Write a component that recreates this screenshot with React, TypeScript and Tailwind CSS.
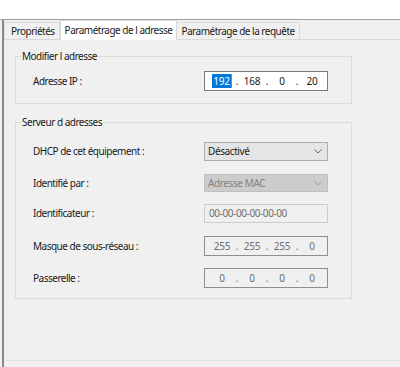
import React from "react";

const font = { fontFamily: '"Noto Sans", "Open Sans", sans-serif' };

function IpField({ parts, disabled, selectFirst }: { parts: string[]; disabled?: boolean; selectFirst?: boolean }) {
  const seg = "w-[24px] flex justify-center";
  const dot = "w-[6px] text-center";
  return (
    <div
      className={
        "w-[124px] h-[20px] flex items-center pl-[5px] border text-[10px] tracking-[-0.3px] " +
        (disabled ? "border-[#8f8f8f] bg-[#f0f0f0] text-[#6d6d6d]" : "border-[#7a7a7a] bg-white text-[#1a1a1a]")
      }
    >
      <div className={seg}>
        {selectFirst ? (
          <span className="bg-[#0078d7] text-white border-r border-r-[#e07020] px-[1px] leading-[14px]">{parts[0]}</span>
        ) : (
          <span>{parts[0]}</span>
        )}
      </div>
      <span className={dot}>.</span>
      <div className={seg}>{parts[1]}</div>
      <span className={dot}>.</span>
      <div className={seg}>{parts[2]}</div>
      <span className={dot}>.</span>
      <div className={seg}>{parts[3]}</div>
    </div>
  );
}

function Row({ label, children, className }: { label: string; children: React.ReactNode; className?: string }) {
  return (
    <div className={"flex items-center " + (className ?? "")}>
      <div className="w-[188px] pl-[17px] text-[10px] tracking-[-0.5px] text-[#1a1a1a]">{label}</div>
      {children}
    </div>
  );
}

function Chevron({ color }: { color: string }) {
  return (
    <svg width="8" height="5" viewBox="0 0 8 5" fill="none">
      <path d="M0.5 0.5 L4 4 L7.5 0.5" stroke={color} strokeWidth="1" />
    </svg>
  );
}

export default function App() {
  return (
    <div className="w-[400px] h-[367px] bg-white flex flex-col" style={font}>
      <div className="h-[19px] bg-white" />
      <div className="flex-1 flex flex-col bg-[#f0f0f0] border-t border-t-[#a0a0a0]">
        <div className="flex-1 flex flex-col ml-[2px] border-l-2 border-l-[#8a8a8a] bg-[#f0f0f0]">
          {/* tabs */}
          <div className="flex items-end h-[20px] border-b border-b-[#d9d9d9] text-[10px] tracking-[-0.5px] text-[#1a1a1a]">
            <div className="h-[17px] pl-[6px] pr-[4px] flex items-center border border-b-0 border-[#d9d9d9] bg-[#f0f0f0]">Propriétés</div>
            <div className="h-[20px] -mb-px px-[4px] flex items-center border border-b-0 border-[#d9d9d9] bg-white">
              Paramétrage de l adresse
            </div>
            <div className="h-[17px] px-[4px] flex items-center border border-b-0 border-l-0 border-[#d9d9d9] bg-[#f0f0f0]">
              Paramétrage de la requête
            </div>
          </div>
          {/* panel */}
          <div className="flex-1 flex flex-col pl-[11px] pt-[10px]">
            <fieldset className="w-[337px] h-[54px] border border-[#dcdcdc] px-0 pb-[8px]">
              <legend className="ml-[5px] px-[1px] text-[10px] tracking-[-0.5px] leading-[13px] text-[#1a1a1a]">Modifier l adresse</legend>
              <Row label="Adresse IP :" className="mt-[8px]">
                <IpField parts={["192", "168", "0", "20"]} selectFirst />
              </Row>
            </fieldset>
            <fieldset className="w-[337px] h-[183px] mt-[12px] border border-[#dcdcdc]">
              <legend className="ml-[5px] px-[1px] text-[10px] tracking-[-0.5px] leading-[13px] text-[#1a1a1a]">Serveur d adresses</legend>
              <Row label="DHCP de cet équipement :" className="mt-[13px]">
                <div className="w-[124px] h-[19px] border border-[#adadad] bg-[#e5e5e5] flex items-center justify-between pl-[3px] pr-[5px] text-[10px] tracking-[-0.4px] text-[#1a1a1a]">
                  <span>Désactivé</span>
                  <Chevron color="#606060" />
                </div>
              </Row>
              <Row label="Identifié par :" className="mt-[13px]">
                <div className="w-[124px] h-[18px] border border-[#bfbfbf] bg-[#cccccc] flex items-center justify-between pl-[3px] pr-[5px] text-[10px] tracking-[-0.4px] text-[#838383]">
                  <span>Adresse MAC</span>
                  <Chevron color="#a0a0a0" />
                </div>
              </Row>
              <Row label="Identificateur :" className="mt-[12px]">
                <div className="w-[124px] h-[19px] border border-[#cccccc] bg-[#f0f0f0] flex items-center pl-[4px] text-[10px] tracking-[-0.4px] text-[#6d6d6d]">
                  00-00-00-00-00-00
                </div>
              </Row>
              <Row label="Masque de sous-réseau :" className="mt-[13px]">
                <IpField parts={["255", "255", "255", "0"]} disabled />
              </Row>
              <Row label="Passerelle :" className="mt-[12px]">
                <IpField parts={["0", "0", "0", "0"]} disabled />
              </Row>
            </fieldset>
          </div>
          <div className="h-[7px] border-t border-t-[#e3e3e3] bg-[#f0f0f0]" />
        </div>
      </div>
    </div>
  );
}
